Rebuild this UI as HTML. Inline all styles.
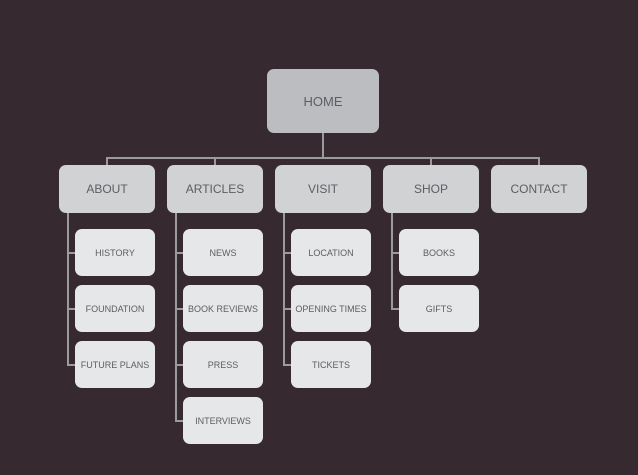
<!DOCTYPE html>
<html><head><style>
body{margin:0;width:638px;height:475px;background:#372930;position:relative;overflow:hidden;font-family:"Liberation Sans",sans-serif;}
.b{position:absolute;border-radius:7px;display:flex;align-items:center;justify-content:center;color:#5d5d63;}
.h{background:#bcbdc1;font-size:13px;}
.l{background:#d1d2d4;font-size:12px;width:96px;height:48px;top:165px;}
.c{background:#e6e7e8;font-size:9px;width:80px;height:47px;}
.ln{position:absolute;background:#9b9a9d;}
</style></head><body>
<div class="ln" style="left:322px;top:133px;width:2px;height:26px"></div>
<div class="ln" style="left:106px;top:157px;width:434px;height:2px"></div>
<div class="ln" style="left:106px;top:157px;width:2px;height:8px"></div>
<div class="ln" style="left:214px;top:157px;width:2px;height:8px"></div>
<div class="ln" style="left:538px;top:157px;width:2px;height:8px"></div>
<div class="ln" style="left:430px;top:157px;width:2px;height:8px"></div>

<div class="b h" style="left:267px;top:69px;width:112px;height:64px">HOME</div>

<div class="b l" style="left:59px">ABOUT</div>
<div class="b l" style="left:167px">ARTICLES</div>
<div class="b l" style="left:275px">VISIT</div>
<div class="b l" style="left:383px">SHOP</div>
<div class="b l" style="left:491px">CONTACT</div>

<!-- about -->
<div class="ln" style="left:67px;top:213px;width:2px;height:153px"></div>
<div class="ln" style="left:67px;top:252px;width:8px;height:2px"></div>
<div class="ln" style="left:67px;top:308px;width:8px;height:2px"></div>
<div class="ln" style="left:67px;top:364px;width:8px;height:2px"></div>
<div class="b c" style="left:75px;top:229px">HISTORY</div>
<div class="b c" style="left:75px;top:285px">FOUNDATION</div>
<div class="b c" style="left:75px;top:341px">FUTURE PLANS</div>
<!-- articles -->
<div class="ln" style="left:175px;top:213px;width:2px;height:209px"></div>
<div class="ln" style="left:175px;top:252px;width:8px;height:2px"></div>
<div class="ln" style="left:175px;top:308px;width:8px;height:2px"></div>
<div class="ln" style="left:175px;top:364px;width:8px;height:2px"></div>
<div class="ln" style="left:175px;top:420px;width:8px;height:2px"></div>
<div class="b c" style="left:183px;top:229px">NEWS</div>
<div class="b c" style="left:183px;top:285px">BOOK REVIEWS</div>
<div class="b c" style="left:183px;top:341px">PRESS</div>
<div class="b c" style="left:183px;top:397px">INTERVIEWS</div>
<!-- visit -->
<div class="ln" style="left:283px;top:213px;width:2px;height:153px"></div>
<div class="ln" style="left:283px;top:252px;width:8px;height:2px"></div>
<div class="ln" style="left:283px;top:308px;width:8px;height:2px"></div>
<div class="ln" style="left:283px;top:364px;width:8px;height:2px"></div>
<div class="b c" style="left:291px;top:229px">LOCATION</div>
<div class="b c" style="left:291px;top:285px">OPENING TIMES</div>
<div class="b c" style="left:291px;top:341px">TICKETS</div>
<!-- shop -->
<div class="ln" style="left:391px;top:213px;width:2px;height:97px"></div>
<div class="ln" style="left:391px;top:252px;width:8px;height:2px"></div>
<div class="ln" style="left:391px;top:308px;width:8px;height:2px"></div>
<div class="b c" style="left:399px;top:229px">BOOKS</div>
<div class="b c" style="left:399px;top:285px">GIFTS</div>
</body></html>
